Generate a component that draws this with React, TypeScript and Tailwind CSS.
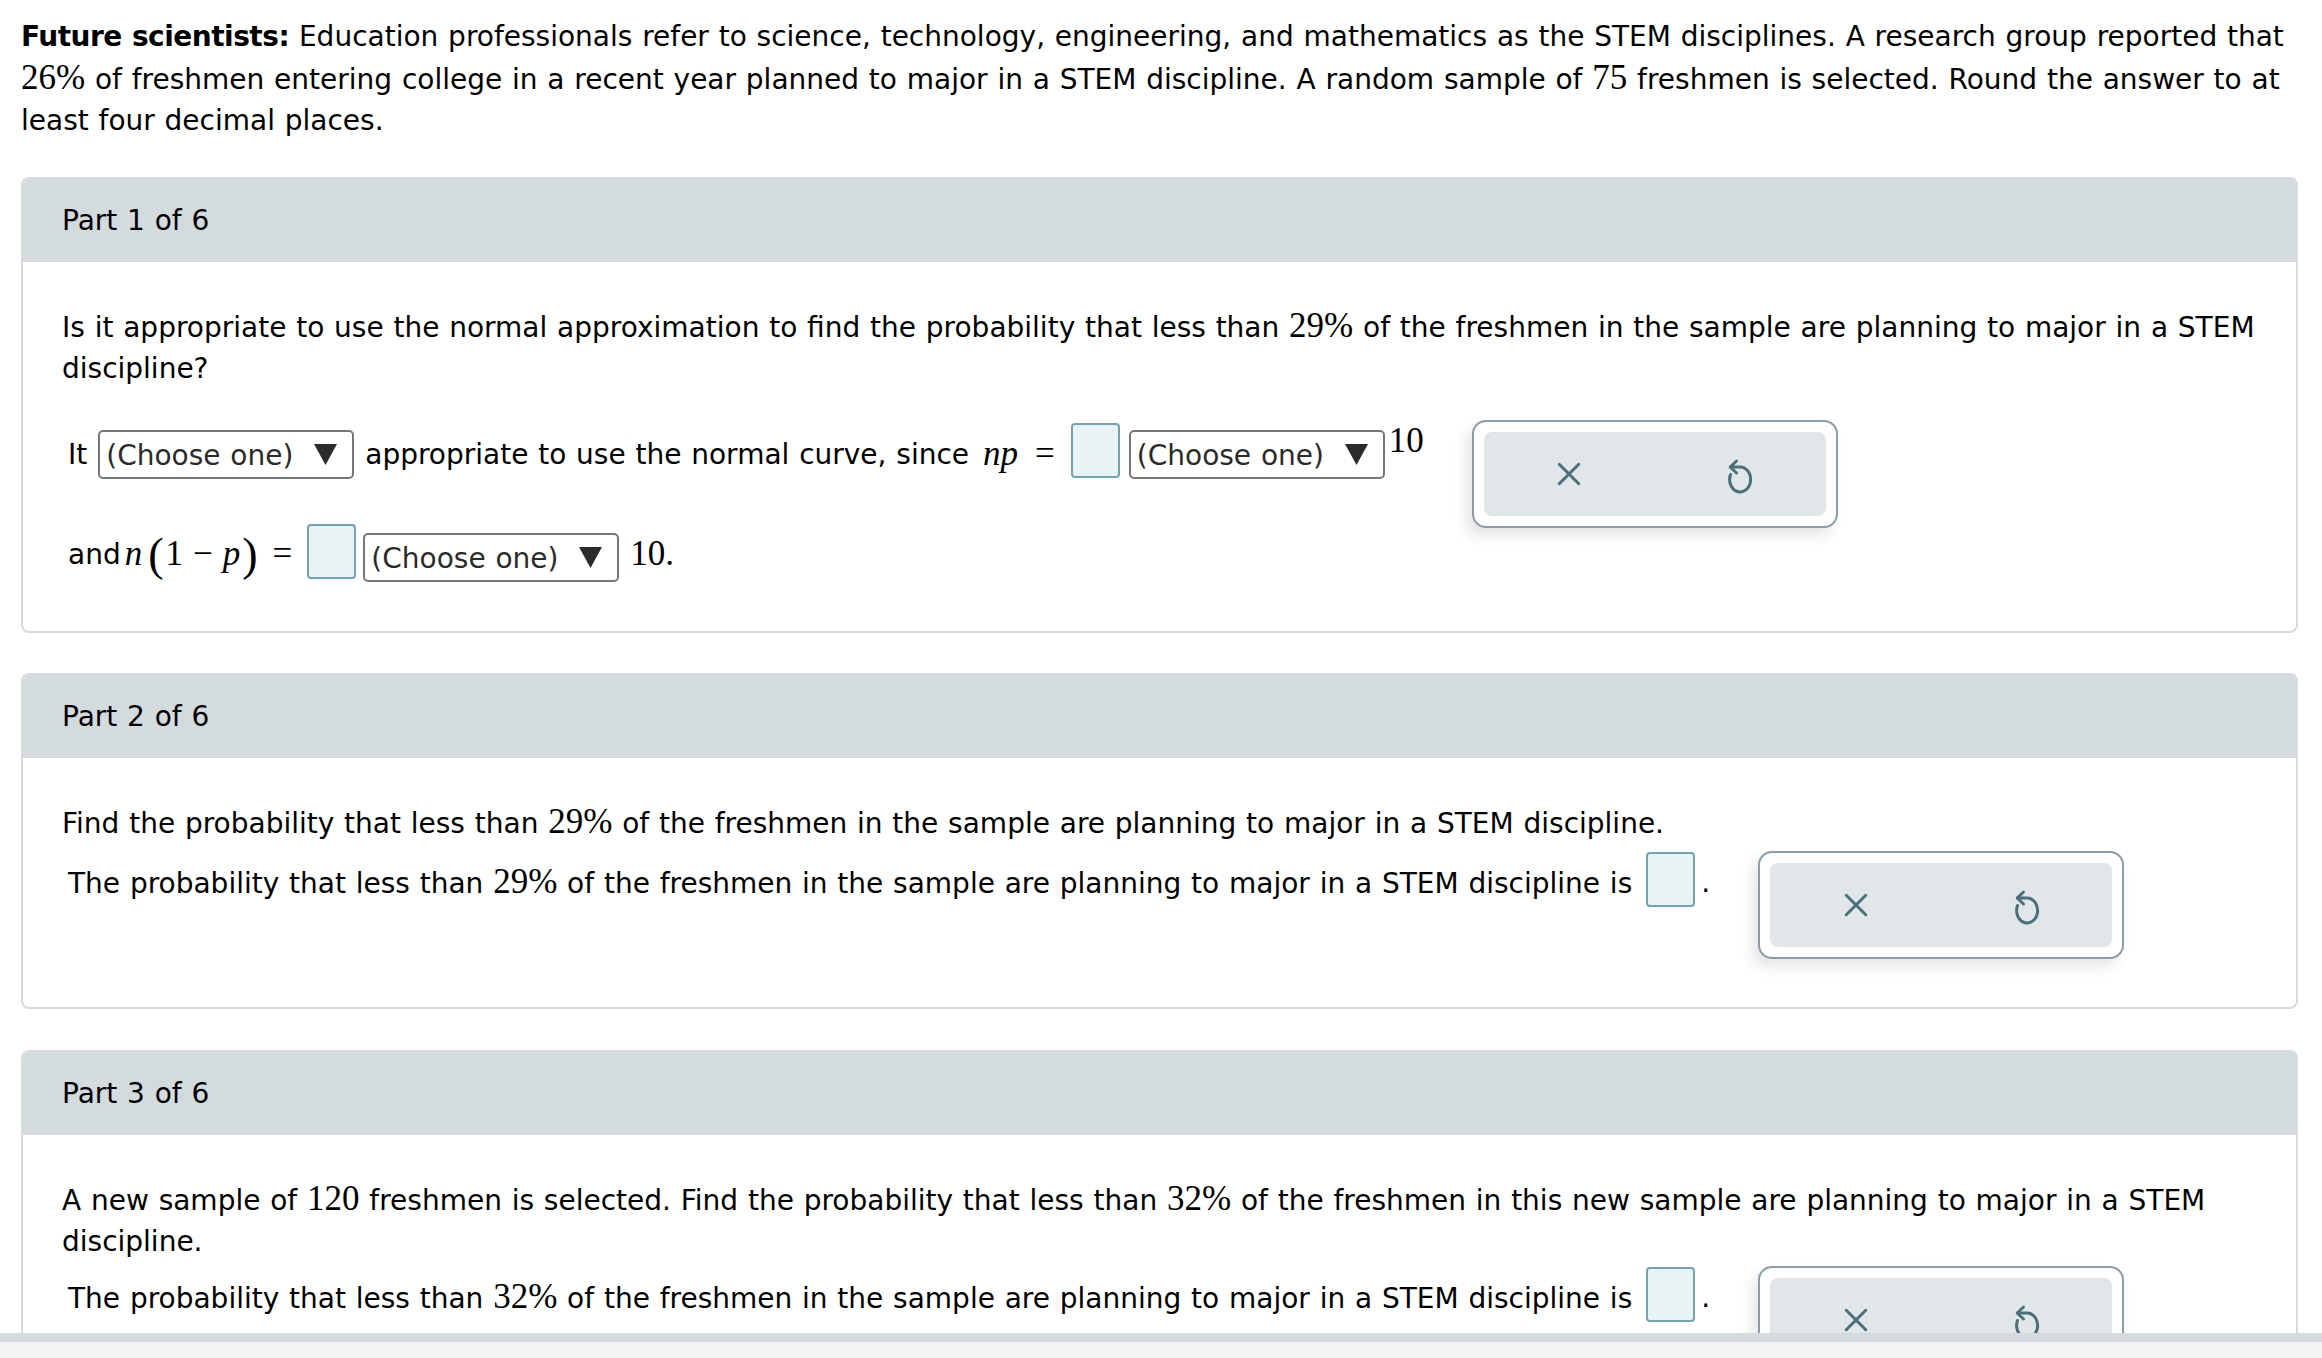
import React from 'react'

const sans = { fontFamily: '"DejaVu Sans", Verdana, sans-serif' }

function M({ children, italic }: { children: React.ReactNode; italic?: boolean }) {
  return (
    <span className={`font-['Liberation_Serif',serif] text-[35px] [word-spacing:0px] ${italic ? 'italic' : ''}`}>{children}</span>
  )
}

function Caret() {
  return (
    <svg width="23" height="21" viewBox="0 0 23 21" className="shrink-0">
      <polygon points="0,0 23,0 11.5,21" fill="#2b2b2b" />
    </svg>
  )
}

function Select() {
  return (
    <div className="flex items-center justify-between w-[256px] h-[49px] border-2 border-[#777] rounded-[5px] bg-white pl-[6px] pr-[15px] text-[28px] text-[#2b2b2b] shrink-0">
      <span className="leading-none pt-[4px]">(Choose one)</span>
      <Caret />
    </div>
  )
}

function Blank() {
  return <div className="w-[49px] h-[55px] shrink-0 rounded-[4px] border-2 border-[#74a3b0] bg-[#e8f3f5]" />
}

function XIcon() {
  return (
    <svg width="26" height="26" viewBox="0 0 24 24" fill="none" stroke="#4b6f7b" strokeWidth="2.8" strokeLinecap="round">
      <path d="M3 3 L21 21 M21 3 L3 21" />
    </svg>
  )
}

function UndoIcon() {
  return (
    <svg width="28" height="38" viewBox="12 9 28 38" fill="none" stroke="#4b6f7b" strokeWidth="3" strokeLinecap="round" strokeLinejoin="round">
      <path d="M22.5 13 L16.2 19 L22.5 25" />
      <path d="M16.5 19 H26 A10.5 12.5 0 1 1 16.5 26.5" />
    </svg>
  )
}

function Actions() {
  return (
    <div className="w-[366px] h-[108px] shrink-0 rounded-[14px] border-2 border-[#8a9ea8] bg-white p-[10px] shadow-[-6px_8px_14px_rgba(0,0,0,0.10)]">
      <div className="flex h-full rounded-[8px] bg-[#e1e6e9]">
        <button className="flex flex-1 items-center justify-center">
          <XIcon />
        </button>
        <button className="flex flex-1 items-center justify-center pt-[4px]">
          <UndoIcon />
        </button>
      </div>
    </div>
  )
}

function Card({ part, top, pb, children }: { part: number; top: string; pb: string; children: React.ReactNode }) {
  return (
    <div className={`${top} rounded-[8px] border-2 border-[#d5dbdf] overflow-hidden bg-white`}>
      <div className="h-[83px] flex items-center pl-[39px] bg-[#d3dbdf]">Part {part} of 6</div>
      <div className={`pt-[43px] pl-[39px] pr-[20px] ${pb}`}>{children}</div>
    </div>
  )
}

export default function App() {
  return (
    <div style={sans} className="flex flex-col h-[1358px] overflow-hidden bg-white text-black text-[28px] leading-[41px] [word-spacing:0.9px]">
      <div className="flex-1 min-h-0 overflow-hidden pt-[16px] pl-[21px] pr-[24px]">
        <p>
          <b className="tracking-[-0.5px]">Future scientists:</b> Education professionals refer to science, technology,
          engineering, and mathematics as the STEM disciplines. A research group reported that <M>26%</M> of freshmen
          entering college in a recent year planned to major in a STEM discipline. A random sample of <M>75</M>{' '}
          freshmen is selected. Round the answer to at least four decimal places.
        </p>

        <Card part={1} top="mt-[36px]" pb="pb-[46px]">
          <p>
            Is it appropriate to use the normal approximation to find the probability that less than <M>29%</M> of the
            freshmen in the sample are planning to major in a STEM discipline?
          </p>
          <div className="mt-[31px] flex items-start gap-[48px]">
            <div className="pl-[6px] pt-[3px] flex flex-col gap-[38px]">
              <div className="h-[62px] flex items-center">
                <span>It</span>
                <div className="ml-[11px]"><Select /></div>
                <span className="ml-[11px]">appropriate to use the normal curve, since</span>
                <span className="ml-[14px]"><M italic>np</M></span>
                <span className="ml-[17px]"><M>=</M></span>
                <div className="ml-[16px] -mt-[8px]"><Blank /></div>
                <div className="ml-[9px]"><Select /></div>
                <span className="ml-[4px] self-start -mt-[3px] font-['Liberation_Serif',serif] text-[35px]">10</span>
              </div>
              <div className="h-[62px] flex items-center">
                <span>and</span>
                <span className="ml-[4px]"><M italic>n</M></span>
                <span className="ml-[6px] font-['Liberation_Serif',serif] text-[46px] leading-[41px]">(</span>
                <span className="ml-[2px]"><M>1</M></span>
                <span className="ml-[10px]"><M>−</M></span>
                <span className="ml-[10px]"><M italic>p</M></span>
                <span className="ml-[2px] font-['Liberation_Serif',serif] text-[46px] leading-[41px]">)</span>
                <span className="ml-[15px]"><M>=</M></span>
                <div className="ml-[15px] -mt-[6px]"><Blank /></div>
                <div className="ml-[7px] mt-[6px]"><Select /></div>
                <span className="ml-[11px]"><M>10.</M></span>
              </div>
            </div>
            <Actions />
          </div>
        </Card>

        <Card part={2} top="mt-[40px]" pb="pb-[48px]">
          <p>
            Find the probability that less than <M>29%</M> of the freshmen in the sample are planning to major in a STEM
            discipline.
          </p>
          <div className="mt-[7px] flex items-start gap-[48px]">
            <div className="pl-[6px] pt-[0px] h-[63px] flex items-center">
              <span>
                The probability that less than <M>29%</M> of the freshmen in the sample are planning to major in a STEM
                discipline is
              </span>
              <div className="ml-[14px] -mt-[6px]"><Blank /></div>
              <span className="ml-[6px]">.</span>
            </div>
            <Actions />
          </div>
        </Card>

        <Card part={3} top="mt-[41px]" pb="pb-[46px]">
          <p>
            A new sample of <M>120</M> freshmen is selected. Find the probability that less than <M>32%</M> of the
            freshmen in this new sample are planning to major in a STEM discipline.
          </p>
          <div className="mt-[4px] flex items-start gap-[48px]">
            <div className="pl-[6px] pt-[0px] h-[63px] flex items-center">
              <span>
                The probability that less than <M>32%</M> of the freshmen in the sample are planning to major in a STEM
                discipline is
              </span>
              <div className="ml-[14px] -mt-[6px]"><Blank /></div>
              <span className="ml-[6px]">.</span>
            </div>
            <Actions />
          </div>
        </Card>
      </div>
      <div className="shrink-0 h-[9px] bg-[#d3dbdf]" />
      <div className="shrink-0 h-[16px] bg-[#f1f3f5]" />
    </div>
  )
}
